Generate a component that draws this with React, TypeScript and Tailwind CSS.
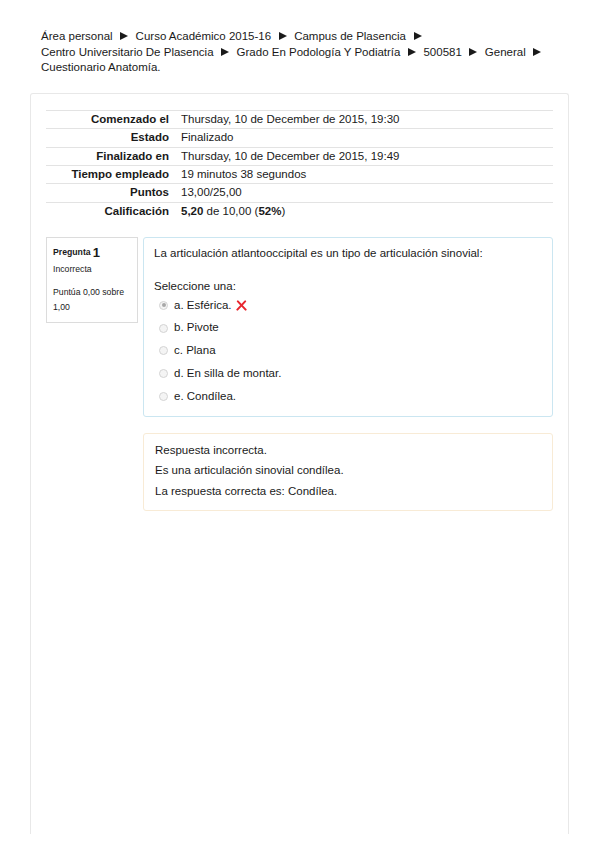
import React from "react";

const font = { fontFamily: '"Liberation Sans", Arial, Helvetica, sans-serif' };

function Arrow() {
  return (
    <span className="inline-block mx-[7.5px] w-0 h-0 border-l-[8px] border-l-[#1a1a1a] border-y-[4.5px] border-y-transparent align-[0px]" />
  );
}

function Radio({ checked }: { checked?: boolean }) {
  return (
    <span className="w-[9px] h-[9px] rounded-full border border-[#d4d4d4] bg-[#f4f4f4] flex items-center justify-center shrink-0">
      {checked && <span className="w-[4px] h-[4px] rounded-full bg-[#a8a8a8]" />}
    </span>
  );
}

function RedX() {
  return (
    <svg width="11" height="11" viewBox="0 0 12 12" className="ml-[4px]">
      <path d="M2 1.5 L10.5 10.5" stroke="#e8262e" strokeWidth="2.2" strokeLinecap="round" />
      <path d="M10 1.5 L1.5 10.5" stroke="#e8262e" strokeWidth="2.2" strokeLinecap="round" />
    </svg>
  );
}

const rows: [string, React.ReactNode][] = [
  ["Comenzado el", "Thursday, 10 de December de 2015, 19:30"],
  ["Estado", "Finalizado"],
  ["Finalizado en", "Thursday, 10 de December de 2015, 19:49"],
  ["Tiempo empleado", "19 minutos 38 segundos"],
  ["Puntos", "13,00/25,00"],
  [
    "Calificación",
    <>
      <b>5,20</b> de 10,00 (<b>52%</b>)
    </>,
  ],
];

const options = ["a. Esférica.", "b. Pivote", "c. Plana", "d. En silla de montar.", "e. Condílea."];

export default function App() {
  return (
    <div className="w-[599px] h-[848px] bg-white text-[#1a1a1a] text-[11.5px] overflow-hidden" style={font}>
      <div className="pt-[29px] pl-[41px] leading-[15.7px]">
        <div>
          Área personal<Arrow />Curso Académico 2015-16<Arrow />Campus de Plasencia<Arrow />
        </div>
        <div>
          Centro Universitario De Plasencia<Arrow />Grado En Podología Y Podiatría<Arrow />500581<Arrow />General<Arrow />
        </div>
        <div>Cuestionario Anatomía.</div>
      </div>

      <div className="ml-[30px] mt-[17px] w-[539px] h-[741px] border border-b-0 border-[#e8e8e8] rounded-t-[3px] px-[15px] pt-[16px]">
        <div className="flex flex-col">
          {rows.map(([k, v]) => (
            <div key={k} className="flex h-[18.3px] items-center border-t border-[#e3e3e3]">
              <div className="w-[123px] text-right font-bold whitespace-nowrap">{k}</div>
              <div className="pl-[12px] whitespace-nowrap">{v}</div>
            </div>
          ))}
        </div>

        <div className="flex items-start mt-[17px]">
          <div className="w-[92px] h-[86px] border border-[#dcdcdc] px-[6px] pt-[4px] text-[8.7px] leading-[15px]">
            <div className="font-bold h-[18px] flex items-end">
              Pregunta <span className="text-[13px] ml-[2px] leading-[15px]">1</span>
            </div>
            <div className="mt-[2px]">Incorrecta</div>
            <div className="mt-[8px]">Puntúa 0,00 sobre</div>
            <div>1,00</div>
          </div>

          <div className="ml-[5px] flex flex-col gap-[16px]">
            <div className="w-[410px] h-[180px] border border-[#cbe6f1] rounded-[3px] pl-[10px] pt-[7px]">
              <div className="leading-[16px]">La articulación atlantooccipital es un tipo de articulación sinovial:</div>
              <div className="mt-[17px] leading-[16px]">Seleccione una:</div>
              <div className="flex flex-col">
                {options.map((o, i) => (
                  <div key={o} className="h-[22.75px] flex items-center pl-[5px]">
                    <Radio checked={i === 0} />
                    <span className="ml-[6px]">{o}</span>
                    {i === 0 && <RedX />}
                  </div>
                ))}
              </div>
            </div>

            <div className="w-[410px] h-[78px] border border-[#f8ebd6] rounded-[3px] pl-[11px] pt-[6px] leading-[20.5px]">
              <div>Respuesta incorrecta.</div>
              <div>Es una articulación sinovial condílea.</div>
              <div>La respuesta correcta es: Condílea.</div>
            </div>
          </div>
        </div>
      </div>
    </div>
  );
}
